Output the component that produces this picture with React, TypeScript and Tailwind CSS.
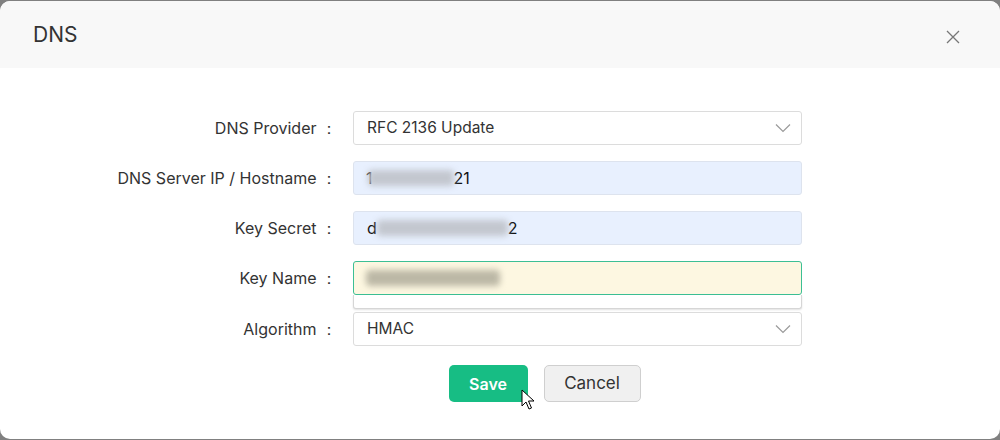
import React from "react";

const font = { fontFamily: "Inter, 'Noto Sans', sans-serif" };

function Chevron() {
  return (
    <svg width="16" height="10" viewBox="0 0 16 10" className="text-[#9a9a9a]">
      <path d="M1 1.5 L8 8.5 L15 1.5" fill="none" stroke="currentColor" strokeWidth="1.2" />
    </svg>
  );
}

function Row({ label, children }: { label: string; children: React.ReactNode }) {
  return (
    <div className="flex items-center">
      <div className="w-[353px] pr-[16px] text-right text-[16px] text-[#333]">{label}</div>
      {children}
    </div>
  );
}

export default function App() {
  return (
    <div className="h-[440px] w-[1000px] overflow-hidden bg-[#808080] pt-px" style={font}>
      <div className="flex h-[438px] flex-col overflow-hidden rounded-[10px] bg-white">
        <div className="flex h-[67px] shrink-0 items-center justify-between bg-[#f8f8f8] pl-[33px] pr-[40px]">
          <span className="text-[21px] text-[#333]">DNS</span>
          <svg width="14" height="14" viewBox="0 0 14 14" className="mt-1 text-[#777]">
            <path d="M1 1 L13 13 M13 1 L1 13" stroke="currentColor" strokeWidth="1.3" />
          </svg>
        </div>

        <div className="flex flex-col pt-[43px]">
          <div className="flex flex-col gap-4">
            <Row label="DNS Provider ：">
              <div className="flex h-[34px] w-[449px] items-center justify-between rounded-[3px] border border-[#dcdcdc] bg-white pl-[13px] pr-[10px] text-[15.5px] text-[#333]">
                <span>RFC 2136 Update</span>
                <Chevron />
              </div>
            </Row>
            <Row label="DNS Server IP / Hostname ：">
              <div className="flex h-[34px] w-[449px] items-center rounded-[3px] border border-[#dde3ee] bg-[#e8f0fe] pl-[12px] text-[16px] text-[#111]">
                <span>1</span>
                <span className="-ml-[5px] inline-block h-[16px] w-[86px] rounded-sm bg-[#c3c7cf] blur-[3px]" />
                <span>21</span>
              </div>
            </Row>
            <Row label="Key Secret ：">
              <div className="flex h-[34px] w-[449px] items-center rounded-[3px] border border-[#dde3ee] bg-[#e8f0fe] pl-[13px] text-[16px] text-[#111]">
                <span>d</span>
                <span className="inline-block h-[16px] w-[131px] rounded-sm bg-[#c3c7cf] blur-[3px]" />
                <span>2</span>
              </div>
            </Row>
            <Row label="Key Name ：">
              <div className="relative w-[449px]">
                <div className="flex h-[34px] items-center rounded-[3px] border border-[#3cbf94] bg-[#fdf7e1] pl-[12px]">
                  <span className="inline-block h-[16px] w-[134px] rounded-sm bg-[#bcb8a6] blur-[3px]" />
                </div>
                <div className="absolute left-0 right-0 top-[34px] h-[14px] rounded-b-[3px] border border-t-0 border-[#d6d6d6] bg-white shadow-[0_1px_2px_rgba(0,0,0,0.12)]" />
              </div>
            </Row>
            <Row label="Algorithm ：">
              <div className="mt-px flex h-[34px] w-[449px] items-center justify-between rounded-[3px] border border-[#dcdcdc] bg-white pl-[13px] pr-[10px] text-[15.5px] text-[#333]">
                <span>HMAC</span>
                <Chevron />
              </div>
            </Row>
          </div>

          <div className="mt-[19px] flex justify-center gap-4 pl-[89px]">
            <div className="relative">
              <button className="h-[37px] w-[79px] rounded-[5px] bg-[#17bd84] text-[16px] font-semibold text-white">
                Save
              </button>
              <svg width="14" height="22" viewBox="0 0 14 22" className="absolute left-[72px] top-[24px]">
                <path d="M1 1 L1 17 L5 13 L8 20 L10.5 19 L7.5 12 L13 12 Z" fill="white" stroke="black" strokeWidth="1" strokeLinejoin="round" />
              </svg>
            </div>
            <button className="h-[37px] w-[97px] rounded-[5px] border border-[#cfcfcf] bg-[#f0f0f0] text-[17px] text-[#333]">
              Cancel
            </button>
          </div>
        </div>
      </div>
    </div>
  );
}
